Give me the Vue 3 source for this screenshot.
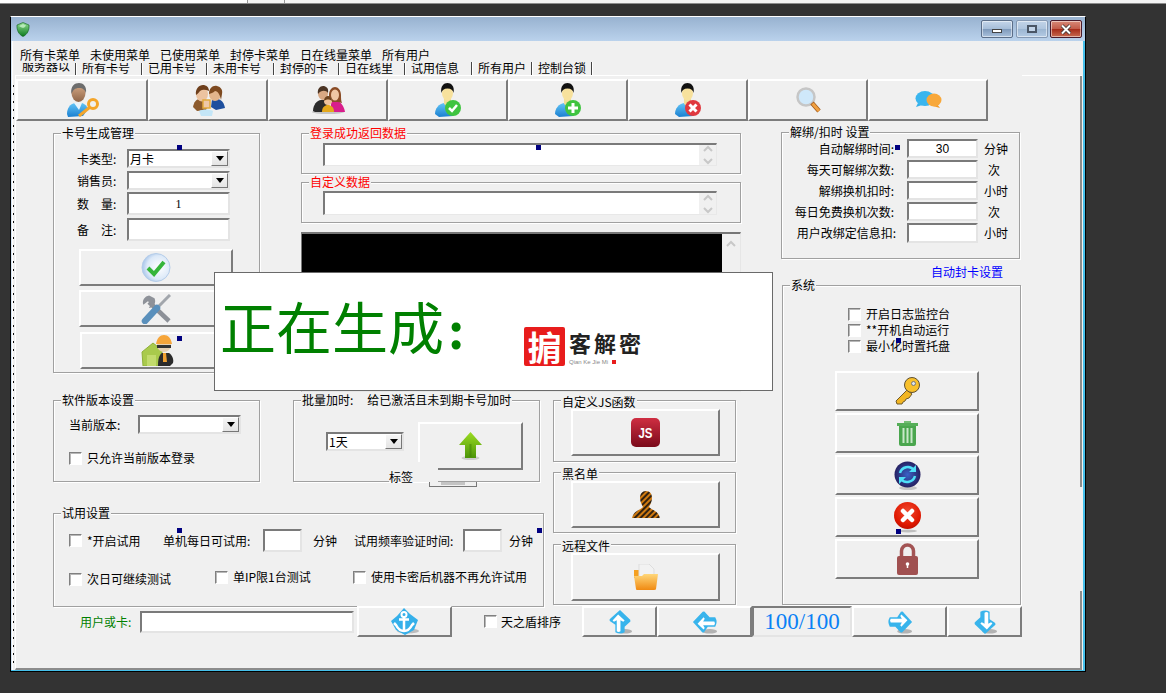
<script setup>
const menus = ['所有卡菜单', '未使用菜单', '已使用菜单', '封停卡菜单', '日在线量菜单', '所有用户']
const tabs = [
  { t: '服务器以', w: 60 }, { t: '所有卡号', w: 66 }, { t: '已用卡号', w: 65 },
  { t: '未用卡号', w: 67 }, { t: '封停的卡', w: 65 }, { t: '日在线里', w: 66 },
  { t: '试用信息', w: 67 }, { t: '所有用户', w: 60 }, { t: '控制台锁', w: 60 }
]
const unbind = [
  { l: '自动解绑时间:', v: '30', u: '分钟' }, { l: '每天可解绑次数:', v: '', u: '次', pad: true },
  { l: '解绑换机扣时:', v: '', u: '小时' }, { l: '每日免费换机次数:', v: '', u: '次', pad: true },
  { l: '用户改绑定信息扣:', v: '', u: '小时', far: true }
]
const marks = [[177, 145], [536, 145], [895, 145], [177, 336], [177, 528], [537, 528], [896, 338], [896, 529]]
</script>

<template>
  <div class="strip"></div>
  <svg class="defs" aria-hidden="true">
    <defs>
      <linearGradient id="gBlue" x1="0" y1="0" x2="0" y2="1"><stop offset="0" stop-color="#62c4f6"/><stop offset="1" stop-color="#1a7fd0"/></linearGradient>
      <linearGradient id="gTan" x1="0" y1="0" x2="0" y2="1"><stop offset="0" stop-color="#d8ab88"/><stop offset="1" stop-color="#8f6548"/></linearGradient>
      <linearGradient id="gJs" x1="0" y1="0" x2="0" y2="1"><stop offset="0" stop-color="#cf2e42"/><stop offset="1" stop-color="#7a0a1a"/></linearGradient>
      <linearGradient id="gFold" x1="0" y1="0" x2="0" y2="1"><stop offset="0" stop-color="#ffd77a"/><stop offset="1" stop-color="#f08a12"/></linearGradient>
      <linearGradient id="gArrow" x1="0" y1="0" x2="0" y2="1"><stop offset="0" stop-color="#9bdc22"/><stop offset="1" stop-color="#4b9408"/></linearGradient>
      <linearGradient id="gShield" x1="0" y1="0" x2="0" y2="1"><stop offset="0" stop-color="#8fdc8f"/><stop offset="1" stop-color="#0b7a1e"/></linearGradient>
      <radialGradient id="gCheck" cx=".6" cy=".5" r=".6"><stop offset="0" stop-color="#ffffff"/><stop offset=".7" stop-color="#dce9f8"/><stop offset="1" stop-color="#a6c4ea"/></radialGradient>
      <radialGradient id="gPurple" cx=".5" cy=".5" r=".55"><stop offset="0" stop-color="#3a63c8"/><stop offset="1" stop-color="#241a58"/></radialGradient>
      <radialGradient id="gRed" cx=".5" cy=".35" r=".7"><stop offset="0" stop-color="#f04a30"/><stop offset=".7" stop-color="#e01800"/><stop offset="1" stop-color="#b80e00"/></radialGradient>
      <pattern id="pStripe" width="4" height="4" patternUnits="userSpaceOnUse" patternTransform="rotate(45)"><rect width="4" height="4" fill="#d07a10"/><rect width="2" height="4" fill="#33220f"/></pattern>
      <symbol id="pers" viewBox="0 0 28 34">
        <path d="M1 31c0-6 4-10 9-11h7c4 1 7 4 8 9l-6 4-14 1z" fill="url(#gBlue)"/>
        <path d="M10 15h7v6l-3 3-4-3z" fill="#f2dd96"/>
        <ellipse cx="13.5" cy="10" rx="5.5" ry="7.5" fill="#f7e19d"/>
        <path d="M7.5 10C6 3 10 0 13.5 0S21 3 19.5 10C19 7 17 5.5 13.5 5.5S8 7 7.5 10z" fill="#111"/>
      </symbol>
      <symbol id="arr" viewBox="0 0 28 28">
        <path d="M14 1 25 11.500q1 2-1 3L19 19v6q-5 3-10 0v-8l-6-4q-1-2 1-3z" fill="#38b4ec"/>
        <path d="M12 6 6 12.500l1.500 1.200 3-1.700V24q2 1.500 4 0V12l3 1.700 1.500-1.200z" fill="#fff"/>
      </symbol>
    </defs>
  </svg>

  <div class="win">
    <div class="title">
      <svg class="shield" width="14" height="15" viewBox="0 0 14 15"><path d="M7 .5 13 3c.4 5-1.600 9.500-6 11.500C2.600 12.500.6 8 1 3z" fill="url(#gShield)" stroke="#0a5c16" stroke-width=".6"/><path d="M3 4 7 2l3 1.500C8 7 6 6 3 4z" fill="#c9f2c9" opacity=".8"/></svg>
      <div class="winbtn wmin"><i></i></div>
      <div class="winbtn wmax"><i></i></div>
      <div class="winbtn wclose"><svg width="14" height="11" viewBox="0 0 14 11"><path d="M3 1.500 11 9.500M11 1.500 3 9.500" stroke="#333" stroke-width="3.500"/><path d="M3 1.500 11 9.500M11 1.500 3 9.500" stroke="#fff" stroke-width="2"/></svg></div>
    </div>

    <div class="client">
      <div class="menu"><span v-for="m in menus" :key="m">{{ m }}</span></div>
      <div class="tabs"><span v-for="(t, i) in tabs" :key="t.t" class="tab" :class="{ active: i === 0 }" :style="{ width: t.w + 'px' }"><span class="tabtext">{{ t.t }}</span></span></div>

      <div class="panel">
        <div class="panel-top"></div>
        <div class="toolbar">
          <div class="btn tool first">
            <svg width="34" height="34" viewBox="0 0 34 34">
              <path d="M2 31c0-6 3-10 8-11h7c3 1 5 3 6 6l-5 7-15 1z" fill="url(#gBlue)"/>
              <path d="M9 20h8l-3 7z" fill="#e9f4fb"/>
              <ellipse cx="13.500" cy="10" rx="7" ry="9" fill="url(#gTan)"/>
              <path d="M6.500 11C5 3 10 0 14 0s8 3 7 10c-1-3-3-5-7-5s-6 2-7.500 6z" fill="#6d6d6d"/>
              <circle cx="28" cy="21" r="4.500" fill="none" stroke="#f4a52a" stroke-width="3"/>
              <path d="M24.500 24.500 14 33" stroke="#f4a52a" stroke-width="3"/>
            </svg>
          </div>
          <div class="btn tool">
            <svg width="34" height="31" viewBox="0 0 34 31">
              <path d="M21 14h6c4 1 6 4 7 9l-9 2-5-3z" fill="#1d4f9e"/>
              <ellipse cx="24" cy="9" rx="6" ry="7" fill="#e2b48c"/>
              <path d="M18 9c0-6 4-9 8-8s6 4 5 8l-1 6c-1-5-3-9-6-9-2 2-4 2-6 3z" fill="#7e4a20"/>
              <path d="M2 22c1-5 3-8 7-8h5l4 5-3 6-9 1z" fill="#8c5a2c"/>
              <ellipse cx="11" cy="9" rx="6" ry="7.500" fill="#ecc3a0"/>
              <path d="M5 10C4 4 8 0 12 0c3 0 6 2 6 6-3-1-6-2-9 0-1 1-2 3-4 4z" fill="#6e3f1c"/>
              <path d="M8 26c4-2 10-2 14 0l-1 5H10z" fill="#c4e6f7"/>
              <rect x="12" y="15" width="7" height="8" fill="#efc8a8" stroke="#e2a93c" stroke-width="1.500"/>
            </svg>
          </div>
          <div class="btn tool">
            <svg width="33" height="28" viewBox="0 0 33 28">
              <ellipse cx="16" cy="26" rx="16" ry="2" fill="#999" opacity=".5"/>
              <path d="M1 25c0-6 4-11 8-11h4l3 5v7H3z" fill="#2c2c2c"/>
              <ellipse cx="11" cy="7.500" rx="5" ry="6.500" fill="#d8a884"/>
              <path d="M6 8c-1-5 2-8 5-8s6 2 5 7c-2-3-7-3-10 1z" fill="#4b3424"/>
              <path d="M19 15h6c4 1 7 5 8 11H19z" fill="#d81e8c"/>
              <path d="M17 9c0-5 3-8 6-8s6 3 6 8c0 3 0 6 1 8l-4-1h-7l-3 1c1-2 1-5 1-8z" fill="#8a4c26"/>
              <ellipse cx="23" cy="9" rx="4" ry="5.500" fill="#efc6a4"/>
              <path d="M10 26c0-5 3-7 6-7s6 2 6 7z" fill="#e4a81c"/>
              <circle cx="16" cy="15" r="4" fill="#eec39c"/>
              <path d="M12 15c0-4 3-5 4-5s4 1 4 5c-2-2-6-2-8 0z" fill="#6e4420"/>
            </svg>
          </div>
          <div class="btn tool">
            <svg width="28" height="34" viewBox="0 0 28 34"><use href="#pers"/><circle cx="19" cy="25" r="8" fill="#3fc43f"/><path d="M15 25l3 3 5-6" fill="none" stroke="#fff" stroke-width="2.500"/></svg>
          </div>
          <div class="btn tool">
            <svg width="28" height="34" viewBox="0 0 28 34"><use href="#pers"/><circle cx="19" cy="25" r="8" fill="#3fc43f"/><path d="M19 20v10M14 25h10" stroke="#fff" stroke-width="3"/></svg>
          </div>
          <div class="btn tool">
            <svg width="28" height="34" viewBox="0 0 28 34"><use href="#pers"/><circle cx="19" cy="25" r="8" fill="#e0383e"/><path d="M15.500 21.500l7 7M22.500 21.500l-7 7" stroke="#fff" stroke-width="3"/></svg>
          </div>
          <div class="btn tool">
            <svg width="25" height="26" viewBox="0 0 25 26"><circle cx="10" cy="10" r="8.500" fill="#cfe8fa" stroke="#c6c6c6" stroke-width="2.500"/><path d="M16 16 23 24" stroke="#a0581a" stroke-width="4.500"/><path d="M16.500 16.500 23 24" stroke="#f0a040" stroke-width="3"/></svg>
          </div>
          <div class="btn tool">
            <svg width="27" height="18" viewBox="0 0 27 18"><path d="M3 12 1 16l6-2z" fill="#36b0ea"/><ellipse cx="10" cy="7.500" rx="9.500" ry="7.500" fill="#39b5ee"/><path d="M22 13l3 4-7-2z" fill="#f59a24"/><ellipse cx="19" cy="9" rx="7.500" ry="6.500" fill="#f8a83a"/></svg>
          </div>
        </div>

        <div class="body">
          <div class="main">
            <div class="work">
              <div class="upper">
                <div class="group g-card">
                  <div class="legend">卡号生成管理</div>
                  <div class="rows">
                    <div class="frow r19"><span class="flabel">卡类型:</span><div class="combo c103"><span>月卡</span><i class="drop"></i></div></div>
                    <div class="frow r19 mt3"><span class="flabel">销售员:</span><div class="combo c103"><span></span><i class="drop"></i></div></div>
                    <div class="frow r23 mt2"><span class="flabel">数　量:</span><div class="inp c103 center serif fill">1</div></div>
                    <div class="frow r23 mt3"><span class="flabel">备　注:</span><div class="inp c103 fill"></div></div>
                  </div>
                  <div class="btn b154 bh37 mt8">
                    <svg width="30" height="31" viewBox="0 0 30 31"><circle cx="15" cy="15.500" r="14" fill="url(#gCheck)" stroke="#b5cde9"/><path d="M7 16l6 6 10-12" fill="none" stroke="#35b53a" stroke-width="4"/></svg>
                  </div>
                  <div class="btn b154 bh37 mt4">
                    <svg width="30" height="30" viewBox="0 0 30 30"><path d="M8 8 28 27" stroke="#8c9097" stroke-width="4.500"/><path d="M9 1.500A7 7 0 0 0 2 10l5-3 3 3-3 4a7 7 0 0 0 7-9z" fill="#8e9299" transform="rotate(-8 8 8)"/><path d="M29 1 18 12" stroke="#a2a6ac" stroke-width="3"/><path d="M16 14 4 27" stroke="#5a90bc" stroke-width="6.500" stroke-linecap="round"/></svg>
                  </div>
                  <div class="btn b154 bh37 mt5 ml1">
                    <svg width="33" height="31" viewBox="0 0 33 31"><path d="M1 17 12 8l9 7v16H2z" fill="#a9ca4c" stroke="#8fb03a"/><path d="M6 20h9v11H6z" fill="#c2db6c"/><path d="M17 31c0-7 1-11 4-13h7c3 2 5 6 4 10l-3 3z" fill="#2b2b2b"/><circle cx="23" cy="10" r="7" fill="#e7d0b2"/><path d="M15 9C16 3 19 0 23 0s7 3 8 9z" fill="#f6a53a"/><path d="M16 10h14v3H16z" fill="#333"/><path d="M22 18h3l1 9h-4z" fill="#f0a030"/></svg>
                  </div>
                </div>

                <div class="midcol">
                  <div class="group g-data">
                    <div class="legend red">登录成功返回数据</div>
                    <div class="area a1"><div class="spin"><svg width="12" height="20" viewBox="0 0 12 20"><path d="M2 6l4-4 4 4M2 14l4 4 4-4" fill="none" stroke="#c8c8c8" stroke-width="2"/></svg></div></div>
                  </div>
                  <div class="group g-data mt8">
                    <div class="legend red">自定义数据</div>
                    <div class="area a2"><div class="spin"><svg width="12" height="20" viewBox="0 0 12 20"><path d="M2 6l4-4 4 4M2 14l4 4 4-4" fill="none" stroke="#c8c8c8" stroke-width="2"/></svg></div></div>
                  </div>
                  <div class="console">
                    <div class="black"></div>
                    <div class="csb"><svg width="12" height="10" viewBox="0 0 12 10"><path d="M2 7l4-4 4 4" fill="none" stroke="#c8c8c8" stroke-width="2"/></svg></div>
                  </div>
                </div>
              </div>

              <div class="lower">
                <div class="lowleft">
                  <div class="lowrow">
                    <div class="group g-ver">
                      <div class="legend">软件版本设置</div>
                      <div class="frow r19 vtop"><span class="vlabel">当前版本:</span><div class="combo c103"><span></span><i class="drop"></i></div></div>
                      <label class="ckrow vck"><i class="ck"></i><span>只允许当前版本登录</span></label>
                    </div>
                    <div class="group g-batch">
                      <div class="legend">批量加时:<span class="lg-gap">给已激活且未到期卡号加时</span></div>
                      <div class="batchrow">
                        <div class="combo c78"><span>1天</span><i class="drop"></i></div>
                        <div class="btn bgreen">
                          <svg width="25" height="29" viewBox="0 0 25 29"><ellipse cx="12.500" cy="26" rx="9" ry="2" fill="#bbb" opacity=".7"/><path d="M12.500 0 24 13h-6v13H7V13H1z" fill="url(#gArrow)"/><path d="M12.500 12v13" stroke="#3f7f06" stroke-width="2" opacity=".5"/></svg>
                        </div>
                      </div>
                      <div class="tag">标签</div>
                      <div class="tinybtn"><i></i></div>
                    </div>
                  </div>
                  <div class="group g-trial">
                    <div class="legend">试用设置</div>
                    <div class="trow t1">
                      <i class="ck"></i><span class="tx w76">*开启试用</span>
                      <span class="tx w100">单机每日可试用:</span><div class="inp i39"></div>
                      <span class="tx w41">分钟</span>
                      <span class="tx w109">试用频率验证时间:</span><div class="inp i39"></div>
                      <span class="tx ml7">分钟</span>
                    </div>
                    <div class="trow t2">
                      <i class="ck dn2"></i><span class="tx w128 dn2">次日可继续测试</span>
                      <i class="ck"></i><span class="tx w121">单IP限1台测试</span>
                      <i class="ck"></i><span class="tx">使用卡密后机器不再允许试用</span>
                    </div>
                  </div>
                </div>

                <div class="lowright">
                  <div class="group g-side h62">
                    <div class="legend">自定义JS函数</div>
                    <div class="btn sidebtn h47">
                      <svg width="29" height="29" viewBox="0 0 29 29"><rect width="29" height="29" rx="5" fill="url(#gJs)"/><text x="14.500" y="20" text-anchor="middle" font-family="Liberation Sans" font-weight="700" font-size="14" fill="#fff" textLength="14" lengthAdjust="spacingAndGlyphs">JS</text></svg>
                    </div>
                  </div>
                  <div class="group g-side h61 mt10">
                    <div class="legend">黑名单</div>
                    <div class="btn sidebtn h47">
                      <svg width="28" height="27" viewBox="0 0 28 27"><path d="M14 0c4 0 6 3 6 7s-2 7-3 9c2 3 9 3 11 11H0c2-8 9-8 11-11-1-2-3-5-3-9s2-7 6-7z" fill="url(#pStripe)"/></svg>
                    </div>
                  </div>
                  <div class="group g-side h61 mt11">
                    <div class="legend">远程文件</div>
                    <div class="btn sidebtn h48">
                      <svg width="25" height="27" viewBox="0 0 25 27"><path d="M1 6h7l2 2v6H1z" fill="#f5a020"/><path d="M6 0h10l5 5v9H6z" fill="#f2f2f2" stroke="#ddd"/><path d="M1 12h8l2-2h14l-2 15q0 1-2 1H4q-1 0-1-1z" fill="url(#gFold)"/></svg>
                    </div>
                  </div>
                </div>
              </div>
            </div>

            <div class="rightcol">
              <div class="group g-unbind">
                <div class="legend">解绑/扣时 设置</div>
                <div v-for="r in unbind" :key="r.l" class="urow" :class="{ far: r.far }">
                  <span class="ulabel">{{ r.l }}</span>
                  <div class="inp u71 center">{{ r.v }}</div>
                  <span class="unit" :class="{ pad: r.pad }">{{ r.u }}</span>
                </div>
              </div>
              <div class="autoset">自动封卡设置</div>
              <div class="group g-sys">
                <div class="legend">系统</div>
                <div class="syschecks">
                  <label class="ckrow"><i class="ck"></i><span>开启日志监控台</span></label>
                  <label class="ckrow"><i class="ck"></i><span>**开机自动运行</span></label>
                  <label class="ckrow"><i class="ck"></i><span>最小化时置托盘</span></label>
                </div>
                <div class="sysbtns">
                  <div class="btn sysbtn">
                    <svg width="26" height="28" viewBox="0 0 26 28"><path d="M13 13 2 24l1 3h5l1-2 2-1 1-2 3-1 3-4z" fill="#f2b522" stroke="#6f5a2a"/><circle cx="18" cy="8" r="7.500" fill="#f8c02c" stroke="#5f5030"/><circle cx="19.500" cy="6.500" r="2" fill="#dfe6ee" stroke="#777"/></svg>
                  </div>
                  <div class="btn sysbtn">
                    <svg width="21" height="26" viewBox="0 0 21 26"><path d="M7 3V1h7v2z" fill="#74bd74"/><rect y="3" width="21" height="3" fill="#55ae58"/><path d="M2 6h17v18q0 2-2 2H4q-2 0-2-2z" fill="#4aa64e"/><path d="M6.500 8v15M10.500 8v15M14.500 8v15" stroke="#c8e8c8" stroke-width="2"/></svg>
                  </div>
                  <div class="btn sysbtn">
                    <svg width="27" height="29" viewBox="0 0 27 29"><ellipse cx="14" cy="27" rx="9" ry="2" fill="#aaa" opacity=".6"/><circle cx="13.500" cy="13.500" r="13" fill="url(#gPurple)"/><path d="M6 12A8 8 0 0 1 20 9M21 15A8 8 0 0 1 7 18" fill="none" stroke="#4fe0f8" stroke-width="2.500"/><path d="M22 4v7h-7zM5 23v-7h7z" fill="#4fe0f8"/></svg>
                  </div>
                  <div class="btn sysbtn">
                    <svg width="27" height="31" viewBox="0 0 27 31"><ellipse cx="14" cy="29" rx="9" ry="1.500" fill="#aaa" opacity=".7"/><circle cx="13.500" cy="13.500" r="13.500" fill="url(#gRed)"/><path d="M9 9l9 9M18 9l-9 9" stroke="#fff" stroke-width="4.500" stroke-linecap="round"/></svg>
                  </div>
                  <div class="btn sysbtn">
                    <svg width="21" height="32" viewBox="0 0 21 32"><path d="M4.500 14V8a6 6 0 0 1 12 0v6" fill="none" stroke="#a35454" stroke-width="3.500"/><rect y="13" width="21" height="19" rx="2" fill="#a05050"/><circle cx="10.500" cy="21" r="1.800" fill="#fff"/><path d="M10.500 21v4" stroke="#fff" stroke-width="1.500"/></svg>
                  </div>
                </div>
              </div>
            </div>
          </div>

          <div class="bottom">
            <span class="userlabel">用户或卡:</span>
            <div class="inp userinp"></div>
            <div class="btn anchorbtn">
              <svg width="30" height="27" viewBox="0 0 30 27"><ellipse cx="18" cy="23" rx="11" ry="2.500" fill="#999" opacity=".6"/><path d="M14 0 20 6l8 6-4 10-9 5-9-5-5-9 6-5z" fill="#35b0ea"/><circle cx="14" cy="6.500" r="2.500" fill="none" stroke="#fff" stroke-width="2"/><path d="M14 9v14M9 11.500h10M4 15l2 2c2 4 5 6 8 6s6-2 8-6l2-2" fill="none" stroke="#fff" stroke-width="2.500"/></svg>
            </div>
            <label class="ckrow sortck"><i class="ck"></i><span>天之盾排序</span></label>
            <div class="btn nav n75"><svg width="26" height="26" viewBox="0 0 28 28"><ellipse cx="19" cy="24" rx="8" ry="2.500" fill="#888" opacity=".6"/><use href="#arr"/></svg></div>
            <div class="btn nav n95"><svg width="26" height="26" viewBox="0 0 28 28"><ellipse cx="19" cy="24" rx="8" ry="2.500" fill="#888" opacity=".6"/><g transform="rotate(-90 14 14)"><use href="#arr"/></g></svg></div>
            <div class="pager">100/100</div>
            <div class="btn nav n95"><svg width="26" height="26" viewBox="0 0 28 28"><ellipse cx="19" cy="24" rx="8" ry="2.500" fill="#888" opacity=".6"/><g transform="rotate(90 14 14)"><use href="#arr"/></g></svg></div>
            <div class="btn nav n75"><svg width="26" height="26" viewBox="0 0 28 28"><ellipse cx="19" cy="24" rx="8" ry="2.500" fill="#888" opacity=".6"/><g transform="rotate(180 14 14)"><use href="#arr"/></g></svg></div>
          </div>
        </div>
      </div>
    </div>

    <i v-for="(m, i) in marks" :key="i" class="mark" :style="{ left: (m[0] - 11) + 'px', top: (m[1] - 17) + 'px' }"></i>

    <div class="overlay">
      <div class="gen">正在生成<b>:</b></div>
      <div class="logo">
        <div class="seal">掮</div>
        <div class="brand">
          <div class="brandcn">客解密</div>
          <div class="brandsub">Qian Ke Jie Mi<i></i></div>
        </div>
      </div>
    </div>
  </div>
</template>

<style>
html, body { background: #333333; }
</style>

<style scoped>
* { box-sizing: border-box; }
i { display: block; font-style: normal; }
.defs { position: absolute; width: 0; height: 0; }
.strip { height: 4px; border-bottom: 1px solid #8c8c8c; background: linear-gradient(to right, #fff 247px, #999 247px, #999 248px, #f4f4f4 248px, #f4f4f4 284px, #999 284px, #999 285px, #f4f4f4 285px); }
.win { position: relative; margin: 12px 0 0 10px; width: 1076px; height: 656px; display: flex; flex-direction: column; border: 1px solid #000; border-top: 1px solid #fff; font: 12px/14px "Noto Sans CJK SC", sans-serif; color: #000; background: #f0f0f0; }
.title { height: 24px; flex: none; display: flex; align-items: flex-start; padding: 3px 3px 0 5px; background: linear-gradient(#98b2d0, #bad2ec); }
.shield { margin-top: 2px; flex: none; }
.winbtn { height: 18px; margin-left: 3px; border: 1px solid #5b6e88; border-radius: 2px; display: flex; align-items: center; justify-content: center; box-shadow: inset 0 0 0 1px rgba(255,255,255,.5); background: linear-gradient(#c5d6ea 0, #a5bdd8 50%, #7f9abb 52%, #a9c1dc 100%); }
.wmin { width: 32px; margin-left: auto; }
.wmin i { width: 10px; height: 4px; margin-top: 4px; background: #fff; border: 1px solid #444; }
.wmax { width: 32px; border-color: #8498b2; background: linear-gradient(#c2d4e8 0, #aec5de 50%, #9cb6d2 52%, #b4cbe4 100%); }
.wmax i { width: 10px; height: 8px; border: 2px solid #4a5666; background: #c2d4e8; }
.wclose { width: 32px; margin-left: 2px; border-color: #4a1a2a; background: linear-gradient(#d88a78 0, #c25a48 50%, #a62c1a 52%, #c86a50 100%); }
.client { flex: 1; min-height: 0; display: flex; flex-direction: column; border-right: 2px solid #45bfea; border-bottom: 1px solid #45bfea; padding: 0 1px 0 4px; background: linear-gradient(to right, #d5e4f2 1px, #fff 1px, #fff 2px, #f0f0f0 2px); position: relative; }
.client::before { content: ""; position: absolute; left: 2px; top: 44px; bottom: 2px; width: 1px; background: linear-gradient(#111 2px, transparent 2px) 0 0 / 1px 8px; }
.menu { height: 15px; flex: none; margin-top: 7px; margin-left: 5px; padding-right: 10px; width: fit-content; display: flex; gap: 10px; position: relative; z-index: 1; background: #f0f0f0; }
.tabs { height: 13px; flex: none; margin-top: -1px; display: flex; padding-left: 1px; }
.tab { padding-left: 6px; border-right: 1px solid #444; box-shadow: 1px 0 #fff; flex: none; height: 13px; display: block; }
.tabtext { display: block; line-height: 12px; height: 12px; white-space: nowrap; }
.active .tabtext { margin-top: -2px; }
.panel { flex: 1; min-height: 0; display: flex; flex-direction: column; border-left: 1px solid #fff; border-bottom: 2px solid #8c8c8c;
  background: linear-gradient(#8c8c8c, #8c8c8c) right top / 2px 412px no-repeat, linear-gradient(#8c8c8c, #8c8c8c) right bottom / 2px 77px no-repeat, #f0f0f0; }
.panel-top { height: 1px; flex: none; background: linear-gradient(to right, #fff 654px, transparent 654px, transparent 1006px, #fff 1006px); }
.btn { display: flex; align-items: center; justify-content: center; flex: none; background: #f0f0f0; border: 2px solid; border-color: #fff #7c7c7c #7c7c7c #fff; }
.btn svg { flex: none; }
.toolbar { height: 42px; flex: none; display: flex; margin-top: 3px; }
.tool { width: 120px; height: 42px; }
.first { width: 132px; }
.body { flex: 1; min-height: 0; padding-left: 37px; display: flex; flex-direction: column; }
.main { height: 485px; flex: none; display: flex; padding-top: 12px; }
.work { width: 688px; flex: none; }
.upper { height: 267px; display: flex; }
.group { border: 1px solid #a0a0a0; box-shadow: 1px 1px 0 #fff, inset 1px 1px 0 #fff; position: relative; flex: none; }
.legend { width: fit-content; height: 14px; margin: -8px 0 0 7px; padding: 0 1px; background: #f0f0f0; white-space: nowrap; line-height: 14px; position: relative; }
.red { color: #f00; }
.g-card { width: 207px; height: 240px; }
.rows { margin: 9px 0 0 23px; width: 160px; }
.frow { display: flex; align-items: center; }
.r19 { height: 19px; }
.r23 { height: 23px; }
.flabel { width: 50px; flex: none; }
.fill { height: 100%; }
.mt2 { margin-top: 2px; }
.mt3 { margin-top: 3px; }
.mt4 { margin-top: 4px; }
.mt5 { margin-top: 5px; }
.mt8 { margin-top: 8px; }
.mt10 { margin-top: 10px; }
.mt11 { margin-top: 11px; }
.b154 { width: 154px; margin-left: 25px; }
.ml1 { margin-left: 26px; }
.bh37 { height: 37px; }
.combo { height: 19px; display: flex; align-items: center; flex: none; background: #fff; border: 2px solid; border-color: #7a7a7a #e4e4e4 #e4e4e4 #7a7a7a; position: relative; line-height: 15px; padding-left: 1px; }
.combo span { flex: 1; }
.c103 { width: 103px; }
.c78 { width: 78px; }
.drop { width: 17px; height: 15px; flex: none; background: linear-gradient(#f6f6f6, #e4e4e4); border: 1px solid; border-color: #fff #777 #777 #fff; position: relative; }
.drop::after { content: ""; position: absolute; left: 4px; top: 4px; border: 4px solid transparent; border-top: 5px solid #000; border-bottom: 0; }
.inp { background: #fff; border: 2px solid; border-color: #7a7a7a #e4e4e4 #e4e4e4 #7a7a7a; flex: none; }
.center { display: flex; align-items: center; justify-content: center; }
.serif { font-family: "Liberation Serif", serif; }
.midcol { width: 440px; margin-left: 41px; flex: none; }
.g-data { height: 41px; width: 440px; }
.area { width: 394px; height: 23px; margin: 3px 0 0 21px; background: #fff; border: 2px solid; border-color: #7a7a7a #e8e8e8 #e8e8e8 #7a7a7a; border-right-width: 1px; border-bottom-width: 1px; display: flex; justify-content: flex-end; }
.a2 { margin-top: 2px; height: 24px; }
.spin { width: 17px; background: #f0f0f0; display: flex; align-items: center; justify-content: center; }
.console { height: 160px; width: 440px; margin-top: 9px; display: flex; border: 2px solid; border-color: #777 #e6e6e6 #e6e6e6 #777; border-left-width: 1px; border-right-width: 1px; }
.black { width: 420px; background: #000; }
.csb { flex: 1; background: #f0f0f0; padding: 3px 0 0 3px; }
.lower { display: flex; }
.lowleft { width: 491px; flex: none; }
.lowrow { display: flex; }
.g-ver { width: 207px; height: 82px; }
.vtop { margin-top: 8px; padding-left: 15px; }
.vlabel { width: 69px; flex: none; }
.ckrow { display: flex; align-items: center; height: 16px; }
.ck { width: 13px; height: 13px; flex: none; background: #fff; border: 1px solid; border-color: #808080 #fff #fff #808080; box-shadow: inset 1px 1px 0 #b8b8b8; margin-right: 5px; }
.vck { margin: 16px 0 0 15px; }
.g-batch { width: 247px; height: 82px; margin-left: 33px; }
.lg-gap { margin-left: 14px; }
.batchrow { display: flex; align-items: flex-start; padding: 15px 0 0 32px; }
.batchrow .combo { margin-top: 10px; }
.bgreen { width: 105px; height: 48px; margin-left: 14px; }
.tag { position: absolute; left: 95px; top: 61px; width: 49px; height: 20px; background: #f0f0f0; line-height: 14px; padding-top: 8px; }
.tinybtn { position: absolute; left: 135px; top: 81px; width: 48px; height: 5px; border: 1px solid #777; border-top: 0; background: #f0f0f0; }
.tinybtn i { width: 24px; height: 3px; margin: 0 auto; background: #c4c4c4; }
.g-trial { width: 491px; height: 94px; margin-top: 31px; }
.trow { display: flex; padding-left: 15px; }
.t1 { align-items: center; height: 23px; margin-top: 9px; }
.t2 { align-items: flex-start; margin-top: 18px; }
.t2 .ck { margin-top: 1px; }
.t2 .dn2.ck { margin-top: 3px; }
.dn2 { margin-top: 2px; }
.tx { flex: none; white-space: nowrap; }
.w76 { width: 76px; }
.w100 { width: 100px; }
.w41 { width: 52px; padding-left: 11px; }
.w109 { width: 109px; }
.ml7 { margin-left: 7px; }
.w128 { width: 128px; }
.w121 { width: 120px; }
.i39 { width: 39px; height: 23px; }
.lowright { width: 183px; margin-left: 9px; flex: none; }
.g-side { width: 183px; padding-top: 2px; }
.h62 { height: 62px; }
.h61 { height: 61px; }
.sidebtn { width: 149px; margin-left: 17px; }
.h47 { height: 47px; }
.h48 { height: 48px; }
.rightcol { width: 240px; margin: -1px 0 0 40px; flex: none; }
.g-unbind { width: 239px; height: 127px; }
.urow { display: flex; align-items: center; height: 19px; margin-bottom: 2px; }
.ulabel { width: 112px; text-align: right; flex: none; white-space: nowrap; margin-right: 13px; }
.far .ulabel { margin-left: 2px; margin-right: 11px; }
.u71 { width: 71px; height: 19px; font-family: "Liberation Sans", sans-serif; }
.far .u71 { height: 20px; }
.unit { margin-left: 6px; }
.pad { margin-left: 10px; }
.autoset { color: #00f; margin: 6px 0 0 150px; height: 14px; }
.g-sys { width: 239px; height: 320px; margin: 6px 0 0 1px; }
.syschecks { padding: 14px 0 0 65px; }
.sysbtns { margin: 17px 0 0 52px; display: flex; flex-direction: column; gap: 2px; }
.sysbtn { width: 144px; height: 40px; }
.bottom { flex: none; display: flex; align-items: center; height: 31px; padding-left: 27px; position: relative; }
.userlabel { width: 60px; color: #008000; flex: none; }
.userinp { width: 214px; height: 22px; }
.anchorbtn { width: 95px; height: 31px; margin-left: 3px; }
.sortck { width: 98px; margin-left: 32px; flex: none; }
.sortck .ck { margin-right: 4px; }
.nav { height: 31px; }
.n75 { width: 75px; }
.n95 { width: 95px; }
.pager { width: 100px; height: 31px; flex: none; display: flex; align-items: center; justify-content: center; border: 2px solid; border-color: #7c7c7c #e4e4e4 #e4e4e4 #7c7c7c; color: #0a80f5; font: 23px/26px "Liberation Serif", serif; }
.mark { position: absolute; width: 5px; height: 5px; background: #000080; z-index: 3; }
.overlay { position: absolute; left: 203px; top: 255px; width: 559px; height: 119px; background: #fff; border: 1px solid #6a6a6a; z-index: 2; display: flex; align-items: flex-start; }
.gen { margin: 21px 0 0 5px; width: 304px; flex: none; color: #008000; font: 400 56px/72px "Liberation Serif", "Noto Sans CJK SC", serif; white-space: nowrap; }
.gen b { font-weight: 700; margin-left: 3px; }
.logo { display: flex; margin-top: 54px; }
.seal { width: 41px; height: 39px; background: #e81c1c; color: #fff; border-radius: 2px; display: flex; align-items: center; justify-content: center; font: 700 34px/39px "Noto Sans CJK SC", sans-serif; flex: none; }
.brand { margin-left: 4px; }
.brandcn { font: 700 22px/26px "Noto Sans CJK SC", sans-serif; color: #222; letter-spacing: 3px; white-space: nowrap; margin-top: 2px; }
.brandsub { display: flex; align-items: center; font: 6px/8px "Liberation Sans", sans-serif; color: #888; margin-top: 3px; white-space: nowrap; }
.brandsub i { width: 4px; height: 4px; background: #e81c1c; margin-left: 4px; }
</style>
